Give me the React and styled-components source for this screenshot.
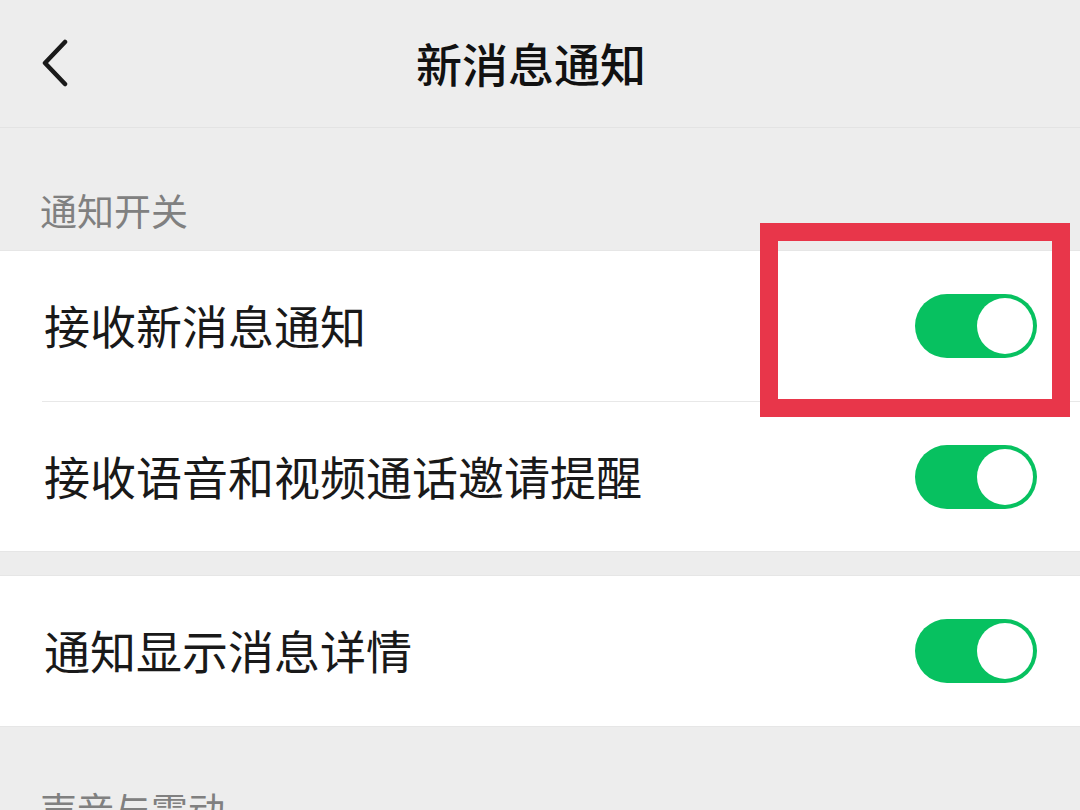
import React from 'react'
import { styled, createGlobalStyle } from 'styled-components'

const GlobalStyle = createGlobalStyle`
  html, body {
    margin: 0;
    padding: 0;
    background: #ededed;
    font-family: "Noto Sans CJK SC", "Noto Sans", sans-serif;
  }
`

const Page = styled.div`
  position: relative;
  width: 1080px;
  height: 810px;
  overflow: hidden;
  background: #ededed;
`

const Header = styled.div`
  height: 128px;
  display: flex;
  align-items: center;
  justify-content: center;
  position: relative;
  border-bottom: 1px solid #e3e3e3;
  box-sizing: border-box;
  padding-right: 18px;
`

const Back = styled.div`
  position: absolute;
  left: 36px;
  top: 38px;
  width: 36px;
  height: 50px;
  display: flex;
  align-items: center;
  justify-content: center;
`

const Title = styled.div`
  font-size: 46px;
  font-weight: 500;
  color: #111;
  margin-top: -4px;
`

const SectionTitle = styled.div`
  height: 122px;
  box-sizing: border-box;
  padding: 60px 0 0 40px;
  font-size: 37px;
  color: #808080;
  line-height: 44px;
`

const Card = styled.div`
  background: #fff;
  margin-top: ${({ $gap }) => $gap || 0}px;
  border-top: 1px solid #e6e6e6;
  border-bottom: 1px solid #e6e6e6;
`

const Row = styled.div`
  height: 150px;
  display: flex;
  align-items: center;
  justify-content: space-between;
  padding: 0 43px 0 44px;
  box-sizing: border-box;
  position: relative;
  & + & {
    border-top: 1px solid #e8e8e8;
    margin-left: 42px;
    padding-left: 2px;
  }
`

const Label = styled.div`
  font-size: 46px;
  color: #191919;
  line-height: 52px;
  margin-top: -4px;
`

const Switch = styled.div`
  width: 122px;
  height: 64px;
  border-radius: 32px;
  background: #07c160;
  display: flex;
  align-items: center;
  justify-content: flex-end;
  padding: 4px;
  box-sizing: border-box;
`

const Knob = styled.div`
  width: 56px;
  height: 56px;
  border-radius: 50%;
  background: #fff;
`

const Highlight = styled.div`
  position: absolute;
  left: 760px;
  top: 223px;
  width: 310px;
  height: 194px;
  box-sizing: border-box;
  border: 18px solid #e8364a;
`

const Toggle = () => (
  <Switch>
    <Knob />
  </Switch>
)

export default function App() {
  return (
    <Page>
      <GlobalStyle />
      <Header>
        <Back>
          <svg width="30" height="48" viewBox="0 0 30 48">
            <path d="M26 3 L6 24 L26 45" fill="none" stroke="#1a1a1a" strokeWidth="4.5" strokeLinecap="round" strokeLinejoin="round" />
          </svg>
        </Back>
        <Title>新消息通知</Title>
      </Header>
      <SectionTitle>通知开关</SectionTitle>
      <Card>
        <Row>
          <Label>接收新消息通知</Label>
          <Toggle />
        </Row>
        <Row>
          <Label>接收语音和视频通话邀请提醒</Label>
          <Toggle />
        </Row>
      </Card>
      <Card $gap={23}>
        <Row>
          <Label>通知显示消息详情</Label>
          <Toggle />
        </Row>
      </Card>
      <SectionTitle>声音与震动</SectionTitle>
      <Highlight />
    </Page>
  )
}
